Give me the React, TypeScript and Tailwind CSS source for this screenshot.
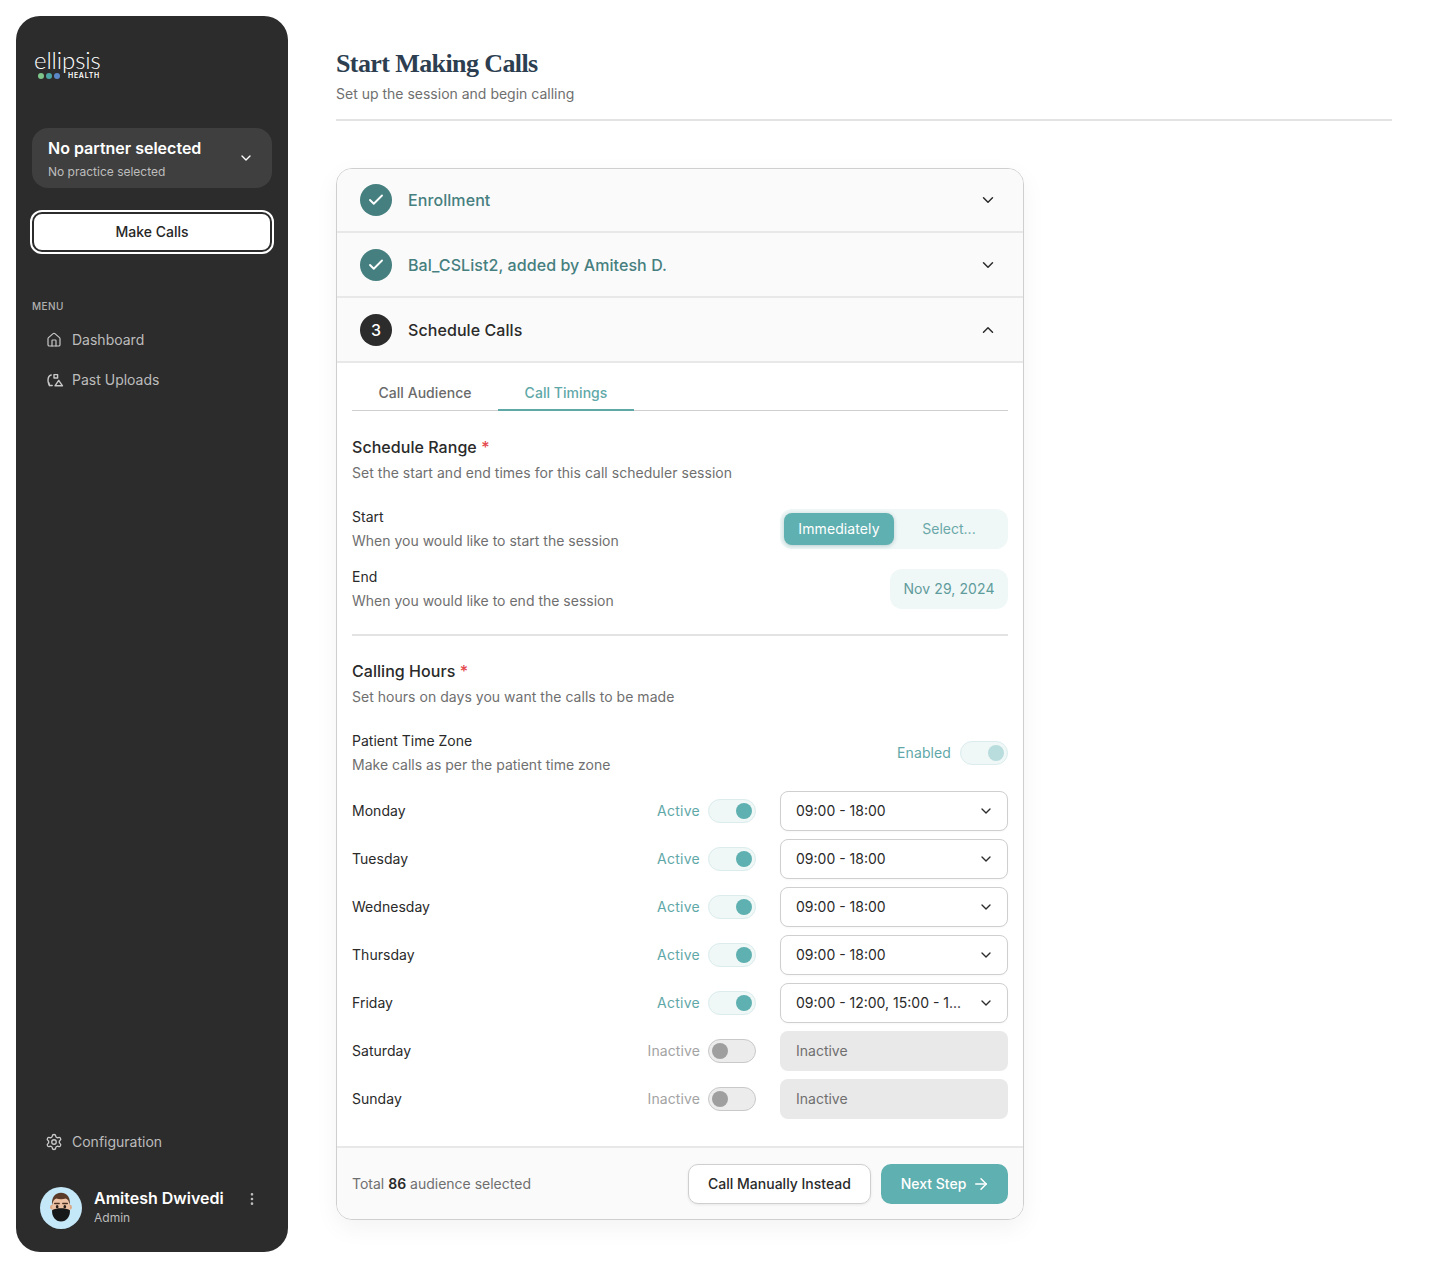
import { ArrowRight, Check, ChevronDown, ChevronUp, EllipsisVertical, House, Settings } from "lucide-react";

const inter = "font-['Inter',sans-serif]";

function Logo() {
  return (
    <div className="flex h-8 w-[68px] flex-col items-start">
      <div className="h-[24px] font-['Lato',sans-serif] text-[24px] leading-[23px] font-light tracking-[-0.1px] text-white">ellipsis</div>
      <div className="flex h-[8px] items-center pl-[4px]">
        <span className="h-[6px] w-[6px] rounded-full bg-[#7fc68b]" />
        <span className="ml-[2px] h-[6px] w-[6px] rounded-full bg-[#4ca6a3]" />
        <span className="ml-[2px] h-[6px] w-[6px] rounded-full bg-[#5b86c8]" />
        <span className="ml-[8px] text-[7px] leading-[8px] font-semibold tracking-[0.7px] text-white">HEALTH</span>
      </div>
    </div>
  );
}

function UploadsIcon() {
  return (
    <svg viewBox="0 0 16 16" className="h-4 w-4 overflow-visible text-[#c8c8c8]" fill="none" stroke="currentColor" strokeWidth="1.4" strokeLinecap="round" strokeLinejoin="round">
      <path d="M5.200 3C3 3.600 2 6 2 8.500c0 2 .6 3.500 1.500 5h2.700" />
      <path d="M2.800 10.800l.7 2.700" />
      <path d="M8 2.600h3.600v3.400H8z" />
      <path d="M9 13.800 12.700 8.400l3.800 5.400z" />
    </svg>
  );
}

function Avatar() {
  return (
    <svg viewBox="0 0 42 42" className="h-[42px] w-[42px]">
      <circle cx="21" cy="21" r="21" fill="#c4e8f8" />
      <g transform="translate(3.15 -2.5) scale(.85 1.03)">
        <circle cx="10.500" cy="22" r="2.400" fill="#d9a988" />
        <circle cx="31.500" cy="22" r="2.400" fill="#d9a988" />
        <ellipse cx="21" cy="22" rx="10.500" ry="13" fill="#edc2a4" />
        <path d="M10.500 20c-.8-7 3-12 10.500-12s11.300 5 10.500 12c-1-4-2.500-6-5-6.500-3 1-8 1-11 0-2.500.5-4 2.500-5 6.500z" fill="#5a3b2a" />
        <path d="M13.500 18.500h5.500M23 18.500h5.500" stroke="#4b3022" strokeWidth="1.400" strokeLinecap="round" />
        <circle cx="16.500" cy="21.500" r="1.600" fill="#2a1d16" />
        <circle cx="25.500" cy="21.500" r="1.600" fill="#2a1d16" />
        <path d="M10.500 25c3-1.500 6-2 10.500-2s7.500.5 10.500 2c.5 6-4 11-10.500 11s-11-5-10.500-11z" fill="#17181a" />
      </g>
    </svg>
  );
}

function Sidebar() {
  return (
    <aside className="flex h-[1236px] w-[272px] shrink-0 flex-col rounded-[24px] bg-[#2c2c2c] px-4 pt-8 pb-[23px]">
      <div className="pl-[2px]"><Logo /></div>
      <button className="mt-12 flex h-[60px] w-[240px] items-center justify-between rounded-2xl bg-[#3f3f3f] pr-[18px] pl-4 text-left">
        <span className="flex flex-col pt-[1px]">
          <span className="text-base leading-5 font-semibold text-white">No partner selected</span>
          <span className="mt-[6px] text-xs leading-4 text-[#bdbdbd]">No practice selected</span>
        </span>
        <ChevronDown className="h-4 w-4 text-white" strokeWidth={2} />
      </button>
      <button className="mt-6 flex h-10 w-[240px] items-center justify-center rounded-[10px] border-2 border-[#2c2c2c] bg-white text-sm font-medium text-[#262626] outline-2 outline-offset-0 outline-white">
        Make Calls
      </button>
      <div className="mt-[48px] text-[10px] leading-[12px] font-medium tracking-[0.4px] text-[#b0b0b0]">MENU</div>
      <nav className="mt-[16px] flex flex-col gap-4 pl-[14px] text-sm text-[#bcbcbc]">
        <div className="flex h-6 items-center gap-[10px]"><House className="h-4 w-4 text-[#c8c8c8]" strokeWidth={1.8} /><span>Dashboard</span></div>
        <div className="flex h-6 items-center gap-[10px]"><UploadsIcon /><span>Past Uploads</span></div>
      </nav>
      <div className="mt-auto flex h-6 items-center gap-[9px] pl-[13px] text-sm text-[#bcbcbc]">
        <Settings className="h-[18px] w-[18px] text-[#c8c8c8]" strokeWidth={1.8} />
        <span>Configuration</span>
      </div>
      <div className="mt-[33px] flex items-center pl-2">
        <Avatar />
        <div className="ml-3 -mt-[2px] flex w-[150px] flex-col">
          <span className="text-base leading-5 font-semibold text-white">Amitesh Dwivedi</span>
          <span className="mt-[2px] text-xs leading-4 text-[#bdbdbd]">Admin</span>
        </div>
        <EllipsisVertical className="mb-[18px] h-4 w-4 text-[#bdbdbd]" strokeWidth={2} />
      </div>
    </aside>
  );
}

function StepHeader({ label, done, open, n, first }: { label: string; done?: boolean; open?: boolean; n?: number; first?: boolean }) {
  return (
    <div className={`flex items-center border-b-2 border-[#e8e8e8] bg-[#fafafa] pr-[26px] pl-[23px] ${first ? "h-[64px]" : "h-[65px]"}`}>
      {done ? (
        <span className="flex h-8 w-8 items-center justify-center rounded-full bg-[#467f7f]"><Check className="h-[18px] w-[18px] text-white" strokeWidth={2.5} /></span>
      ) : (
        <span className="flex h-8 w-8 items-center justify-center rounded-full bg-[#2c2c2c] text-base font-medium text-white">{n}</span>
      )}
      <span className={`ml-4 flex-1 text-base font-medium tracking-[0.08px] ${done ? "text-[#467f7f]" : "text-[#2a2a2a]"}`}>{label}</span>
      {open ? <ChevronUp className="h-[18px] w-[18px] text-[#2c2c2c]" strokeWidth={2} /> : <ChevronDown className="h-[18px] w-[18px] text-[#2c2c2c]" strokeWidth={2} />}
    </div>
  );
}

function Toggle({ on, soft }: { on: boolean; soft?: boolean }) {
  return (
    <span className={`flex h-6 w-12 items-center rounded-full border px-[3px] ${on ? "justify-end border-[#dcecec] bg-[#eff7f7]" : "justify-start border-[#c9c9c9] bg-[#ececec]"}`}>
      <span className={`h-4 w-4 rounded-full ${on ? (soft ? "bg-[#b9dcdc]" : "bg-[#5fb0b0]") : "bg-[#9f9f9f]"}`} />
    </span>
  );
}

function DayRow({ day, time }: { day: string; time?: string }) {
  const on = Boolean(time);
  return (
    <div className="flex h-10 items-center">
      <span className="flex-1 text-sm tracking-[0.03px] text-[#2a2a2a]">{day}</span>
      <span className={`mr-[8px] text-sm ${on ? "tracking-[0.25px] text-[#5fa8a8]" : "tracking-[0.1px] text-[#a3a3a3]"}`}>{on ? "Active" : "Inactive"}</span>
      <Toggle on={on} />
      {on ? (
        <div className="ml-6 flex h-10 w-[228px] items-center justify-between rounded-lg border border-[#cfcfcf] bg-white pr-[13px] pl-[15px] text-sm text-[#2a2a2a] shadow-[0_1px_2px_rgba(0,0,0,0.03)]">
          <span>{time}</span>
          <ChevronDown className="h-4 w-4 text-[#2c2c2c]" strokeWidth={2} />
        </div>
      ) : (
        <div className="ml-6 flex h-10 w-[228px] items-center rounded-lg bg-[#e9e9e9] pl-4 text-sm text-[#6f6f6f]">Inactive</div>
      )}
    </div>
  );
}

function Field({ title, sub, children }: { title: string; sub: string; children: React.ReactNode }) {
  return (
    <div className="flex h-12 items-center justify-between">
      <div className="flex flex-col">
        <span className="text-sm leading-6 text-[#2a2a2a]">{title}</span>
        <span className="text-sm leading-6 text-[#6f6f6f]">{sub}</span>
      </div>
      {children}
    </div>
  );
}

function Heading({ title, sub }: { title: string; sub: string }) {
  return (
    <div>
      <div className="text-base leading-6 font-medium tracking-[0.05px] text-[#2a2a2a]">
        {title} <span className="text-[#e5484d]">*</span>
      </div>
      <div className="mt-[2px] text-sm leading-6 tracking-[0.03px] text-[#6f6f6f]">{sub}</div>
    </div>
  );
}

function Card() {
  return (
    <section className="mt-[47px] flex h-[1052px] w-[688px] flex-col overflow-hidden rounded-2xl border border-[#cfcfcf] bg-white shadow-[0_8px_24px_rgba(0,0,0,0.05)]">
      <StepHeader label="Enrollment" done first />
      <StepHeader label="Bal_CSList2, added by Amitesh D." done />
      <StepHeader label="Schedule Calls" n={3} open />
      <div className="flex-1 px-[15px]">
        <div className="flex h-[48px] items-end border-b border-[#cfcfcf] text-sm font-medium tracking-[0.05px]">
          <span className="flex h-[34px] w-[146px] items-center justify-center text-[#6a6a6a]">Call Audience</span>
          <span className="-mb-px flex h-[35px] w-[136px] items-center justify-center border-b-2 border-[#5fa8a8] text-[#5fa8a8]">Call Timings</span>
        </div>
        <div className="mt-6"><Heading title="Schedule Range" sub="Set the start and end times for this call scheduler session" /></div>
        <div className="mt-[20px] flex flex-col gap-3">
          <Field title="Start" sub="When you would like to start the session">
            <div className="flex h-10 w-[228px] items-center rounded-xl bg-[#f0f7f7] px-1 text-sm">
              <span className="flex h-8 w-[110px] items-center justify-center rounded-lg bg-[#5fb0b0] tracking-[0.1px] text-white shadow-[0_1px_4px_rgba(70,127,127,0.35)]">Immediately</span>
              <span className="flex-1 text-center text-[#6aa9a9]">Select...</span>
            </div>
          </Field>
          <Field title="End" sub="When you would like to end the session">
            <div className="flex h-10 w-[118px] items-center justify-center rounded-xl bg-[#f0f7f7] text-sm tracking-[0.1px] text-[#5f9c9c]">Nov 29, 2024</div>
          </Field>
        </div>
        <div className="mt-[21px] h-[2px] bg-[#e3e3e3]" />
        <div className="mt-[23px]"><Heading title="Calling Hours" sub="Set hours on days you want the calls to be made" /></div>
        <div className="mt-[20px]">
          <Field title="Patient Time Zone" sub="Make calls as per the patient time zone">
            <div className="flex items-center gap-[9px]">
              <span className="text-sm tracking-[0.1px] text-[#5fa8a8]">Enabled</span>
              <Toggle on soft />
            </div>
          </Field>
        </div>
        <div className="mt-[14px] flex flex-col gap-2">
          <DayRow day="Monday" time="09:00 - 18:00" />
          <DayRow day="Tuesday" time="09:00 - 18:00" />
          <DayRow day="Wednesday" time="09:00 - 18:00" />
          <DayRow day="Thursday" time="09:00 - 18:00" />
          <DayRow day="Friday" time="09:00 - 12:00, 15:00 - 1..." />
          <DayRow day="Saturday" />
          <DayRow day="Sunday" />
        </div>
      </div>
      <footer className="flex h-[73px] items-center justify-between border-t-2 border-[#e8e8e8] bg-[#fafafa] pt-[1px] pr-[15px] pl-[15px]">
        <span className="text-sm text-[#6f6f6f]">Total <b className="font-semibold text-[#2a2a2a]">86</b> audience selected</span>
        <div className="flex gap-[10px]">
          <button className="flex h-10 w-[183px] items-center justify-center rounded-[10px] border border-[#cfcfcf] bg-white text-sm font-medium text-[#2a2a2a] shadow-[0_1px_3px_rgba(0,0,0,0.08)]">Call Manually Instead</button>
          <button className="flex h-10 w-[127px] items-center justify-center gap-[6px] rounded-[10px] bg-[#5fb0b0] pl-[2px] text-sm font-medium text-white">Next Step <ArrowRight className="h-[18px] w-[18px]" strokeWidth={2} /></button>
        </div>
      </footer>
    </section>
  );
}

export default function App() {
  return (
    <div className={`flex h-[1268px] w-[1440px] bg-white p-4 ${inter}`}>
      <Sidebar />
      <main className="ml-12 w-[1056px] pt-[30px]">
        <h1 className="font-['Liberation_Serif',serif] text-[26px] leading-9 font-bold tracking-[-0.6px] text-[#2c3e50]">Start Making Calls</h1>
        <p className="text-sm leading-6 text-[#6f6f6f]">Set up the session and begin calling</p>
        <div className="mt-[13px] h-[2px] bg-[#e3e3e3]" />
        <Card />
      </main>
    </div>
  );
}
